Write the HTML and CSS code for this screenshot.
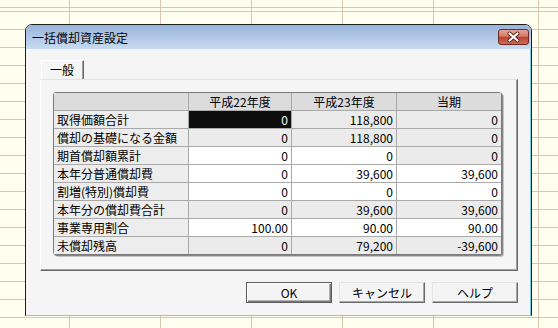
FILE: index.html
```html
<!DOCTYPE html>
<html>
<head>
  <meta charset="UTF-8" />
  <title>一括償却資産設定</title>
<link rel="stylesheet" href="styles.css">
</head>
<body>
  <div class="sheet">
  <div class="dialog">
    <div class="titlebar">
      <span class="title">一括償却資産設定</span>
      <span class="close">
        <svg width="29" height="14" viewBox="0 0 29 14">
          <path d="M10.5 3.5 L18.5 10.5 M18.5 3.5 L10.5 10.5" stroke="#5b2019" stroke-width="4" stroke-linecap="round" fill="none"/>
          <path d="M10.5 3.5 L18.5 10.5 M18.5 3.5 L10.5 10.5" stroke="#ffffff" stroke-width="2.2" stroke-linecap="round" fill="none"/>
        </svg>
      </span>
    </div>
    <div class="dialogBody">
      <div class="tabStrip">
        <div class="tab">一般</div>
      </div>
      <div class="pane">
        <table class="grid">
          <tr>
            <th class="colLabel"></th>
            <th class="col1">平成22年度</th>
            <th class="col2">平成23年度</th>
            <th class="col3">当期</th>
          </tr>
          <tr>
            <td class="label">取得価額合計</td>
            <td class="num selected">0</td>
            <td class="num grey">118,800</td>
            <td class="num grey">0</td>
          </tr>
          <tr>
            <td class="label">償却の基礎になる金額</td>
            <td class="num grey">0</td>
            <td class="num grey">118,800</td>
            <td class="num grey">0</td>
          </tr>
          <tr>
            <td class="label">期首償却額累計</td>
            <td class="num">0</td>
            <td class="num">0</td>
            <td class="num grey">0</td>
          </tr>
          <tr>
            <td class="label">本年分普通償却費</td>
            <td class="num">0</td>
            <td class="num">39,600</td>
            <td class="num">39,600</td>
          </tr>
          <tr>
            <td class="label">割増(特別)償却費</td>
            <td class="num">0</td>
            <td class="num">0</td>
            <td class="num">0</td>
          </tr>
          <tr>
            <td class="label">本年分の償却費合計</td>
            <td class="num grey">0</td>
            <td class="num grey">39,600</td>
            <td class="num grey">39,600</td>
          </tr>
          <tr>
            <td class="label">事業専用割合</td>
            <td class="num">100.00</td>
            <td class="num">90.00</td>
            <td class="num">90.00</td>
          </tr>
          <tr>
            <td class="label">未償却残高</td>
            <td class="num grey">0</td>
            <td class="num grey">79,200</td>
            <td class="num grey">-39,600</td>
          </tr>
        </table>
      </div>
      <div class="buttons">
        <button class="btn default">OK</button>
        <button class="btn">キャンセル</button>
        <button class="btn">ヘルプ</button>
      </div>
    </div>
  </div>
  </div>
</body>
</html>
```

FILE: styles.css
```css
html, body {
  margin: 0;
  padding: 0;
}
body {
  font-family: "Noto Sans CJK JP", sans-serif;
  font-size: 12px;
  color: #000;
}
/* spreadsheet behind the dialog */
.sheet {
  width: 558px;
  height: 328px;
  box-sizing: border-box;
  padding: 24px 0 0 25px;
  overflow: hidden;
  background-color: #fffff0;
  background-image:
    linear-gradient(to right,
      transparent 69px, #d6c6b2 69px 70px,
      transparent 70px 160px, #d6c6b2 160px 161px,
      transparent 161px 251px, #d6c6b2 251px 252px,
      transparent 252px 342px, #d6c6b2 342px 343px,
      transparent 343px 433px, #d6c6b2 433px 434px,
      transparent 434px 538px, #d6c6b2 538px 539px,
      transparent 539px),
    repeating-linear-gradient(to bottom, #d6c6b2 0 1px, transparent 1px 18px);
  background-position: 0 0, 0 11px;
}
/* window frame */
.dialog {
  width: 507px;
  height: 292px;
  box-sizing: border-box;
  border: 1px solid #1d1d1d;
  border-radius: 7px 7px 0 0;
  background: #f5f5f5;
}
.titlebar {
  height: 24px;
  display: flex;
  align-items: center;
  justify-content: space-between;
  padding-left: 6px;
  border-radius: 6px 6px 0 0;
  background: linear-gradient(#9ab5db, #c7daf0);
}
.title {
  line-height: 24px;
  padding-top: 2px;
}
.close {
  width: 31px;
  height: 16px;
  box-sizing: border-box;
  margin: 0 2px 0 0;
  align-self: flex-start;
  margin-top: 4px;
  border: 1px solid #6d2a22;
  border-radius: 3px;
  background: linear-gradient(#e7a494, #d47a66 45%, #b8432f 50%, #cf6a54);
}
.close svg {
  display: block;
}
.dialogBody {
  height: 267px;
  box-sizing: border-box;
  padding: 11px 12px 11px 14px;
  border-right: 1px solid #7ccae2;
  border-bottom: 1px solid #7ccae2;
}
/* tab */
.tabStrip {
  height: 19px;
  display: flex;
}
.tab {
  width: 43px;
  margin-left: 1px;
  box-sizing: border-box;
  padding-left: 8px;
  line-height: 18px;
  border-top: 1px solid #fff;
  border-left: 1px solid #fff;
  border-right: 1px solid #696969;
  box-shadow: inset -1px 0 0 #a0a0a0;
}
.pane {
  height: 192px;
  box-sizing: border-box;
  padding: 12px 13px 0 12px;
  border-top: 1px solid #e2e2e2;
  border-left: 1px solid #fff;
  border-right: 1px solid #696969;
  border-bottom: 1px solid #696969;
  box-shadow: inset -1px -1px 0 #a0a0a0;
}
/* data grid */
.grid {
  width: 449px;
  table-layout: fixed;
  border-collapse: separate;
  border-spacing: 0;
  border: 1px solid #7a7a7a;
  border-radius: 3px;
  box-shadow: 1px 1px 0 #858585, 2px 2px 0 #c6c6c6;
  background: #fff;
}
.grid th, .grid td {
  box-sizing: border-box;
  height: 18px;
  padding: 0 3px;
  line-height: 17px;
  font-weight: normal;
  white-space: nowrap;
  overflow: hidden;
  border-right: 1px solid #a9a9a9;
  border-bottom: 1px solid #a9a9a9;
}
.grid th {
  background: #dcdcdc;
  text-align: center;
}
.grid th:last-child, .grid td:last-child {
  border-right: none;
}
.grid tr:last-child td {
  border-bottom: none;
  height: 17px;
}
.colLabel { width: 135px; }
.col1 { width: 103px; }
.col2 { width: 105px; }
.col3 { width: 104px; }
.grid td.label {
  background: #ededed;
  text-align: left;
}
.grid td.num {
  text-align: right;
}
.grid td.grey {
  background: #ebebeb;
}
.grid td.selected {
  background: #0d0d0d;
  color: #fff;
}
/* buttons */
.buttons {
  margin-top: 11px;
  display: flex;
  justify-content: flex-end;
  gap: 7px;
}
.btn {
  width: 86px;
  height: 21px;
  padding: 0;
  font-family: "Noto Sans CJK JP", sans-serif;
  font-size: 12px;
  line-height: 17px;
  color: #000;
  background: #f4f4f4;
  border: 1px solid;
  border-color: #e4e4e4 #6a6a6a #6a6a6a #e4e4e4;
  box-shadow: inset -1px -1px 0 #a8a8a8;
}
.btn.default {
  border-color: #5c5c5c;
  box-shadow: inset 1px 1px 0 #fff, inset -1px -1px 0 #7a7a7a, inset -2px -2px 0 #b0b0b0;
}
```
